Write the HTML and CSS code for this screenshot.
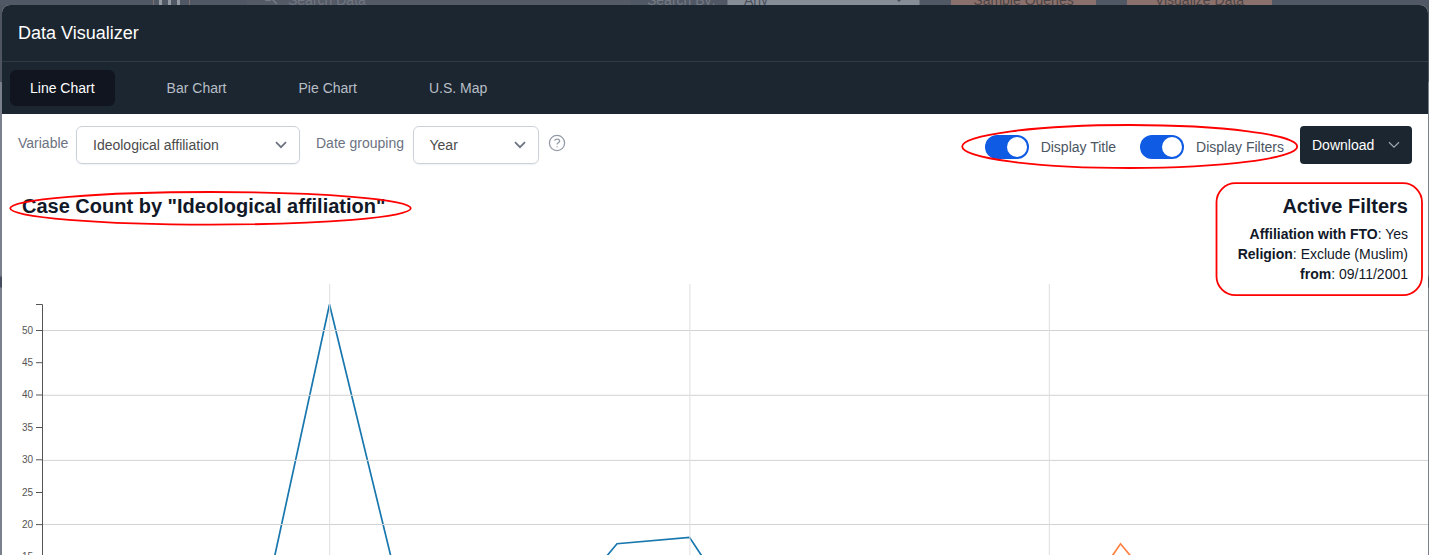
FILE: index.html
```html
<!DOCTYPE html>
<html lang="en">
<head>
<meta charset="utf-8">
<title>Data Visualizer</title>
<link rel="stylesheet" href="styles.css">
</head>
<body>
<div class="backdrop">
  <div class="logo"><i></i><i></i><i></i></div>
  <div class="search"><svg width="18" height="18" viewBox="0 0 18 18"><circle cx="7" cy="7" r="5.5"/><path d="M11 11l5 5"/></svg><span>Search Data</span></div>
  <div class="search-by">Search By:</div>
  <div class="any"><span>Any</span><svg width="8" height="6" viewBox="0 0 8 6"><path d="M1 1l3 3 3-3"/></svg></div>
  <div class="action">Sample Queries</div>
  <div class="action second">Visualize Data</div>
</div>
<main class="modal">
  <header class="head">Data Visualizer</header>
  <nav class="tabs">
    <a class="tab active">Line Chart</a>
    <a class="tab">Bar Chart</a>
    <a class="tab">Pie Chart</a>
    <a class="tab">U.S. Map</a>
  </nav>
  <section class="toolbar">
    <label class="label">Variable</label>
    <div class="select variable"><span>Ideological affiliation</span><svg class="chevron" width="12" height="8" viewBox="0 0 12 8"><path d="M1 1.2l5 5 5-5"/></svg></div>
    <label class="label grouping-label">Date grouping</label>
    <div class="select grouping"><span>Year</span><svg class="chevron" width="12" height="8" viewBox="0 0 12 8"><path d="M1 1.2l5 5 5-5"/></svg></div>
    <svg class="help" width="18" height="18" viewBox="0 0 18 18"><circle cx="9" cy="9" r="7.6"/><path d="M6.6 6.700c.6-2.200 5-2.100 5 .4 0 1.800-2.500 1.600-2.500 3.400M9.100 12.200v1"/></svg>
    <div class="right">
      <div class="option"><span class="toggle"></span><span>Display Title</span></div>
      <div class="option"><span class="toggle"></span><span>Display Filters</span></div>
      <button class="download"><span>Download</span><svg class="chevron" width="12" height="8" viewBox="0 0 12 8"><path d="M1 1.200l5 5 5-5"/></svg></button>
    </div>
  </section>
  <section class="summary">
    <h2 class="title">Case Count by "Ideological affiliation"</h2>
    <div class="filters">
      <h2 class="title">Active Filters</h2>
      <div><b>Affiliation with FTO</b>: Yes</div>
      <div><b>Religion</b>: Exclude (Muslim)</div>
      <div><b>from</b>: 09/11/2001</div>
    </div>
  </section>
  <svg class="chart" width="1426" height="271" viewBox="2 284 1426 271">
    <g class="series">
      <path class="blue" d="M274.500 557L329.500 304.500L391 557M606 557L617 543.700L689.500 537.300L702.500 557"/>
      <path class="orange" d="M1111.500 557L1120.500 543.800L1131.500 557"/>
    </g>
    <path class="grid" d="M43 330.500H1428M43 395.300H1428M43 460.400H1428M43 524.500H1428"/>
    <path class="grid upright" d="M329.700 284V555M689.900 284V555M1049.300 284V555"/>
    <path class="axis" d="M36 304.500H42.500V556M36 330.500H42M36 362.700H42M36 395H42M36 427.500H42M36 459.800H42M36 492.500H42M36 524.600H42"/>
    <g class="ticks">
      <text x="33" y="334">50</text><text x="33" y="366">45</text><text x="33" y="398">40</text><text x="33" y="431">35</text><text x="33" y="463">30</text><text x="33" y="496">25</text><text x="33" y="528">20</text><text x="33" y="560">15</text>
    </g>
  </svg>
</main>
<svg class="marks" width="1429" height="555" viewBox="0 0 1429 555">
  <ellipse cx="210.500" cy="208.300" rx="200.300" ry="16.300"/>
  <ellipse cx="1129.700" cy="146.500" rx="167.500" ry="21.500"/>
  <rect x="1216.500" y="183.200" width="205.500" height="112" rx="19"/>
</svg>
</body>
</html>
```
FILE: styles.css
```css
* { box-sizing: border-box; }
body {
  margin: 0;
  width: 1429px;
  height: 555px;
  overflow: hidden;
  background: linear-gradient(#505661 0 82px, #7b818c 82px 275px, #454d5e 278px 287px, #7b818c 288px);
  font: 14px/20px "Liberation Sans", Arial, sans-serif;
  color: #111827;
}
svg { flex: none; fill: none; }
.backdrop {
  display: flex;
  height: 5px;
  overflow: hidden;
  background: #515865;
}
.backdrop > * { height: 5px; }
.logo {
  display: flex;
  gap: 6px;
  width: 37px;
  margin-left: 153px;
  padding-left: 5px;
  border: solid #80706f;
  border-width: 0 1px;
}
.logo i { width: 3px; background: #969ba3; }
.search {
  display: flex;
  gap: 9px;
  width: 384px;
  margin-left: 57px;
  padding-left: 14px;
  background: #555a67;
  color: #707681;
}
.search, .search-by, .any, .action { line-height: 0; }
.search svg { margin-top: -12px; stroke: #757b85; stroke-width: 1.5; }
.search-by { width: 96px; padding-left: 16px; color: #747a84; }
.any {
  display: flex;
  justify-content: space-between;
  width: 193px;
  padding: 0 16px;
  background: #878d97;
  border: solid #6d7480;
  border-width: 0 1px;
  color: #4b525e;
}
.any svg { margin-top: -3px; stroke: #4b525e; stroke-width: 1.5; }
.action {
  width: 145px;
  margin-left: 31px;
  background: #8b716d;
  color: #4c4546;
  text-align: center;
}
.modal {
  width: 1426px;
  height: 550px;
  margin-left: 2px;
  overflow: hidden;
  background: #fff;
  border-radius: 8px 8px 0 0;
}
.head {
  height: 57px;
  padding: 14px 16px;
  background: #1c2630;
  border-bottom: 1px solid #303b46;
  color: #fff;
  font-size: 18px;
  line-height: 28px;
}
.tabs {
  display: flex;
  gap: 32px;
  height: 52px;
  padding: 8px;
  background: #1c2630;
}
.tab {
  height: 36px;
  padding: 8px 20px;
  border-radius: 6px;
  color: #b8bec7;
}
.tab.active { background: #101520; color: #fff; }
.toolbar {
  display: flex;
  height: 66px;
  padding: 12px 16px 0;
}
.label { width: 58px; padding-top: 7px; color: #6b7280; }
.grouping-label { width: 96.500px; margin-left: 16px; white-space: nowrap; }
.select {
  display: flex;
  align-items: center;
  justify-content: space-between;
  height: 38px;
  padding: 0 12px 0 16px;
  border: 1px solid #cbd0da;
  border-radius: 6px;
  box-shadow: 0 1px 2px rgba(0, 0, 0, .06);
  color: #4b4b4b;
}
.variable { width: 224px; }
.grouping { width: 126px; }
.select .chevron { stroke: #6b7280; stroke-width: 1.7; }
.help { margin: 8px 0 0 9px; stroke: #949ba8; stroke-width: 1.3; }
.right { display: flex; margin-left: auto; }
.option {
  display: flex;
  gap: 12px;
  height: 24px;
  margin: 9px 0 0 24px;
  line-height: 24px;
  color: #4b5563;
}
.toggle {
  width: 44px;
  height: 24px;
  padding: 2px;
  border-radius: 12px;
  background: #0f5be3;
}
.toggle::after {
  content: "";
  display: block;
  width: 20px;
  height: 20px;
  margin-left: 20px;
  border-radius: 50%;
  background: #fff;
}
.download {
  display: flex;
  align-items: center;
  justify-content: space-between;
  width: 112px;
  height: 38px;
  margin-left: 16px;
  padding: 0 12px;
  border: 0;
  border-radius: 4px;
  background: #1c2630;
  color: #fff;
  font: inherit;
}
.download .chevron { stroke: #9ca3af; stroke-width: 1.3; }
.summary {
  display: flex;
  justify-content: space-between;
  height: 104px;
  padding: 12px 20px 0;
}
.title { margin: 0; font-size: 20px; line-height: 28px; }
.filters { text-align: right; }
.filters .title { margin-bottom: 4px; }
.chart { display: block; }
.blue { stroke: #1877ae; stroke-width: 1.700; }
.orange { stroke: #ff7f3f; stroke-width: 1.700; }
.grid { stroke: #d3d3d3; }
.upright { stroke: #dedede; }
.axis { stroke: #555; }
.ticks { fill: #555; font-size: 10px; text-anchor: end; }
.marks {
  position: absolute;
  top: 0;
  left: 0;
  pointer-events: none;
  stroke: #f00;
  stroke-width: 1.800;
}
```
